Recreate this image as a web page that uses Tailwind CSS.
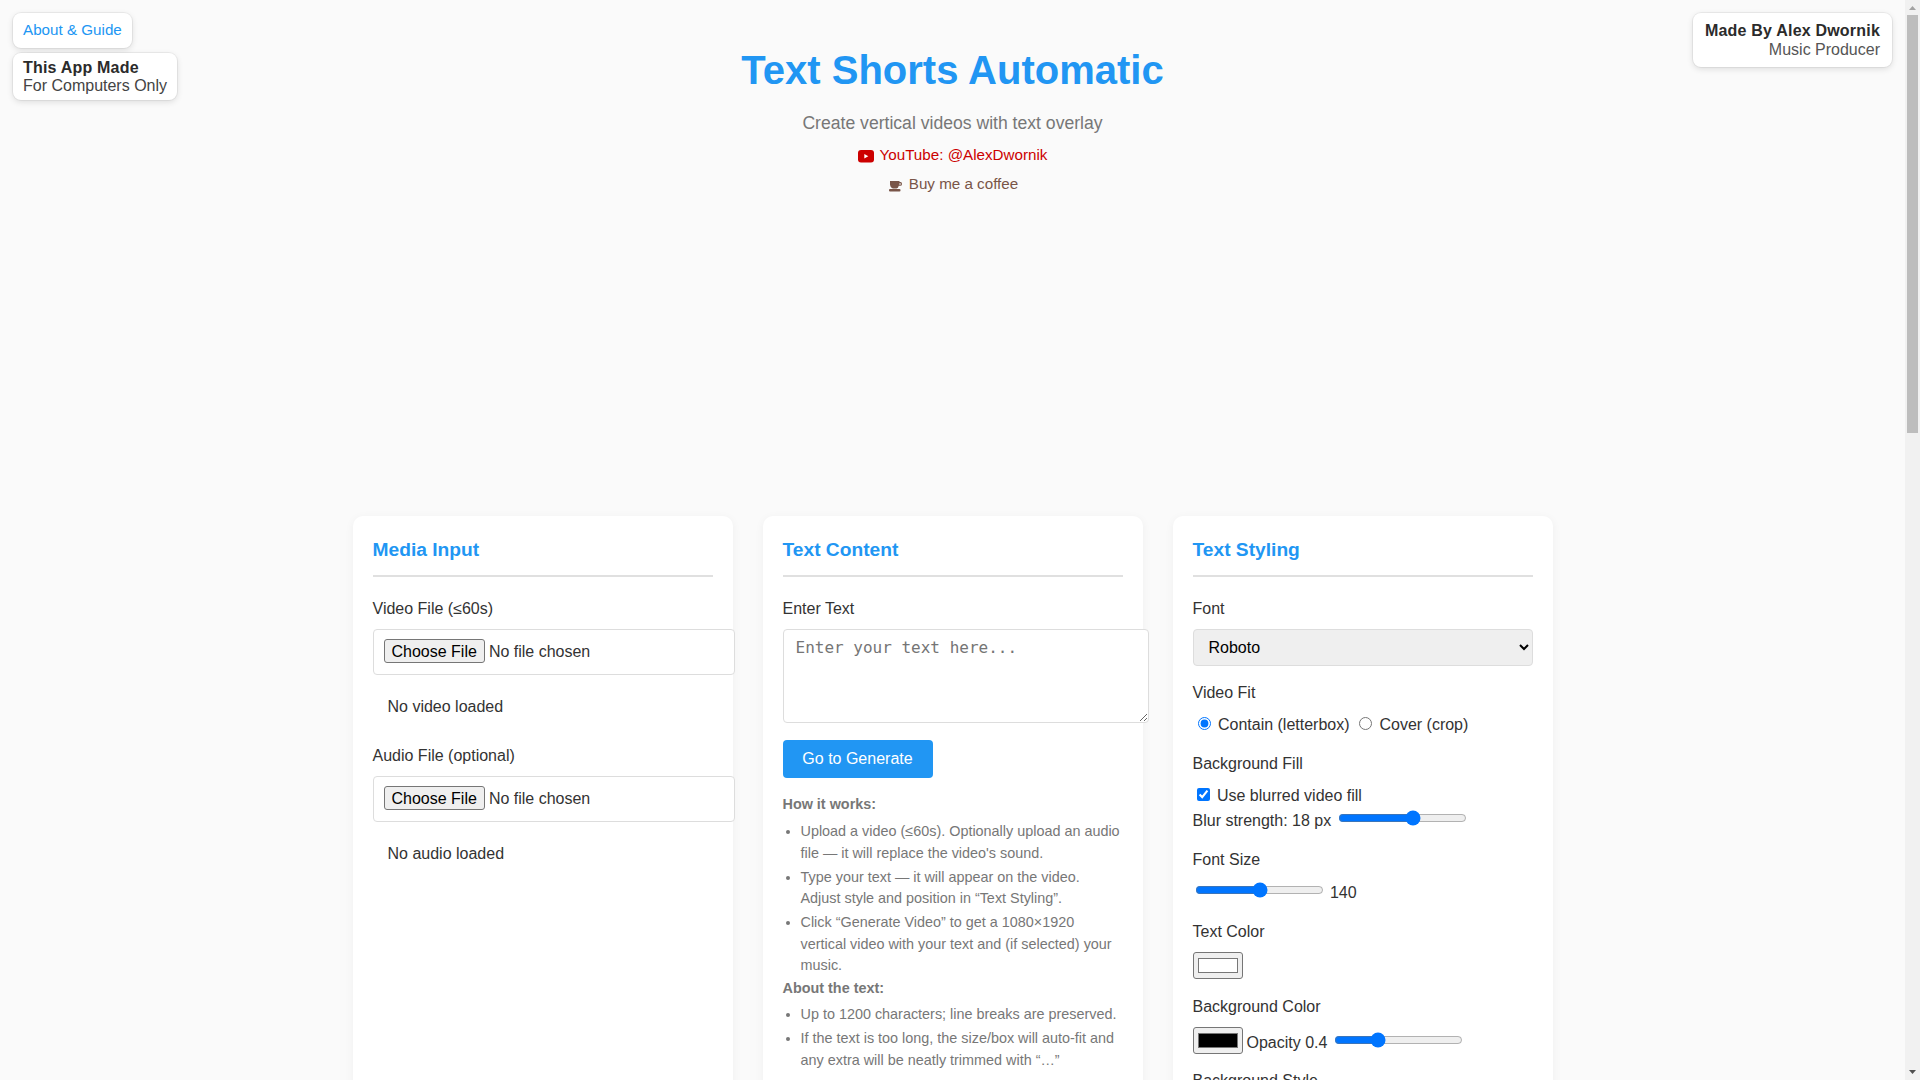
<!DOCTYPE html>
<html lang="en">
<head>
<meta charset="utf-8">
<title>Text Shorts Automatic</title>
<script src="https://cdn.jsdelivr.net/npm/@tailwindcss/browser@4"></script>
</head>
<body class="relative bg-[#fafafa] text-[#333] font-['Liberation_Sans',Arial,sans-serif] text-[16px] pr-[15px] min-h-[2713px]">
<a class="absolute left-[13px] top-[13px] h-[35px] px-[10px] flex items-center bg-white rounded-[8px] text-[15.2px] text-[#2196f3] shadow-[0_2px_6px_rgba(0,0,0,0.12),0_0_0_1px_rgba(0,0,0,0.05)]">About &amp; Guide</a>
<div class="absolute left-[13px] top-[53px] h-[47px] px-[10px] flex flex-col justify-center bg-white rounded-[8px] leading-[18px] shadow-[0_2px_6px_rgba(0,0,0,0.12),0_0_0_1px_rgba(0,0,0,0.05)]">
  <div class="font-bold tracking-[0.2px] text-[#2b2b2b]">This App Made</div>
  <div class="text-[#444]">For Computers Only</div>
</div>
<div class="absolute right-[28px] top-[13px] h-[54px] px-[12px] flex flex-col justify-center items-end bg-white rounded-[8px] leading-[19px] shadow-[0_2px_6px_rgba(0,0,0,0.12),0_0_0_1px_rgba(0,0,0,0.05)]">
  <div class="font-bold tracking-[0.2px] text-[#2b2b2b]">Made By Alex Dwornik</div>
  <div class="text-[#555]">Music Producer</div>
</div>

<div class="absolute right-0 top-0 w-[15px] h-[1080px] bg-[#f1f1f1]">
  <svg class="absolute left-[4px] top-[6px]" width="7" height="4" viewBox="0 0 7 4"><path d="M3.5 0 L7 4 H0 Z" fill="#a3a3a3"/></svg>
  <div class="absolute left-[2px] top-[15px] w-[11px] h-[418px] bg-[#bdbdbd]"></div>
  <svg class="absolute left-[4px] bottom-[6px]" width="7" height="4" viewBox="0 0 7 4"><path d="M0 0 H7 L3.5 4 Z" fill="#505050"/></svg>
</div>

<header class="pt-[46px] h-[516px] text-center">
  <h1 class="text-[40px] leading-[48px] font-bold text-[#2196f3]">Text Shorts Automatic</h1>
  <p class="mt-[19px] text-[17.6px] leading-[21px] text-[#777]">Create vertical videos with text overlay</p>
  <a class="mt-[12px] flex items-center justify-center text-[15.2px] leading-[18px] text-[#cc0000]">
    <svg class="mr-[6px] mt-[2px]" width="16" height="13" viewBox="0 0 16 13"><rect x="0" y="0" width="16" height="12.5" rx="3" fill="#cc0000"/><path d="M6.3 3.9 L10.3 6.2 L6.3 8.5 Z" fill="#fff"/></svg>YouTube: @AlexDwornik</a>
  <a class="mt-[11px] ml-[2px] flex items-center justify-center text-[15.2px] leading-[18px] text-[#795548]">
    <svg class="mr-[7px] mt-[4px]" width="13" height="11" viewBox="0 0 13 11"><path d="M1 0 H10.5 V1 H11.5 Q13 1 13 2.9 Q13 4.8 11.2 4.8 H9.8 Q9.2 7.4 7.5 7.4 H4 Q1.6 7.4 1 3.6 Z M10.4 2.2 V3.7 H11.2 Q11.9 3.7 11.9 2.9 Q11.9 2.2 11.2 2.2 Z" fill="#795548"/><rect x="0" y="8" width="11.5" height="2.6" rx="1" fill="#795548"/></svg>Buy me a coffee</a>
</header>

<main class="mx-auto w-[1200px] grid grid-cols-3 gap-[30px] items-start">
  <section class="bg-white rounded-[10px] p-[20px] h-[1400px] shadow-[0_2px_10px_rgba(0,0,0,0.05)]">
    <h2 class="pt-[2px] pb-[14px] text-[19.2px] leading-[23px] font-bold text-[#2196f3] border-b-2 border-[#e0e0e0]">Media Input</h2>
    <label class="block mt-[22px] leading-[20px] text-[#333]">Video File (≤60s)</label>
    <input type="file" class="block mt-[10px] box-content w-full h-[24px] pt-[9px] pb-[11px] px-[10px] border border-[#ddd] rounded-[4px] bg-white text-[#333] file:mr-[4px] file:h-[24px] file:px-[7px] file:border file:border-[#767676] file:rounded-[3px] file:bg-[#efefef] file:text-black">
    <div class="mt-[22px] ml-[15px] leading-[20px] text-[#333]">No video loaded</div>
    <label class="block mt-[29px] leading-[20px] text-[#333]">Audio File (optional)</label>
    <input type="file" class="block mt-[10px] box-content w-full h-[24px] pt-[9px] pb-[11px] px-[10px] border border-[#ddd] rounded-[4px] bg-white text-[#333] file:mr-[4px] file:h-[24px] file:px-[7px] file:border file:border-[#767676] file:rounded-[3px] file:bg-[#efefef] file:text-black">
    <div class="mt-[22px] ml-[15px] leading-[20px] text-[#333]">No audio loaded</div>
  </section>

  <section class="bg-white rounded-[10px] p-[20px] h-[1400px] shadow-[0_2px_10px_rgba(0,0,0,0.05)]">
    <h2 class="pt-[2px] pb-[14px] text-[19.2px] leading-[23px] font-bold text-[#2196f3] border-b-2 border-[#e0e0e0]">Text Content</h2>
    <label class="block mt-[22px] leading-[20px] text-[#333]">Enter Text</label>
    <textarea placeholder="Enter your text here..." class="block mt-[10px] box-content w-full h-[72px] px-[12px] pt-[8px] pb-[12px] border border-[#ddd] rounded-[4px] bg-white font-['DejaVu_Sans_Mono',monospace] text-[16px] leading-[19px] placeholder:text-[#757575]"></textarea>
    <button class="block mt-[17px] w-[150px] h-[38px] rounded-[4px] bg-[#2196f3] text-white text-[16px]">Go to Generate</button>
    <div class="mt-[18px] text-[14.4px] leading-[16px] text-[#777]">
      <strong class="block font-bold">How it works:</strong>
      <ul class="mt-[9px] ml-[18px] list-disc leading-[21.6px]">
        <li class="mb-[2.4px]">Upload a video (≤60s). Optionally upload an audio file — it will replace the video's sound.</li>
        <li class="mb-[2.4px]">Type your text — it will appear on the video. Adjust style and position in “Text Styling”.</li>
        <li class="mb-[2.4px]">Click “Generate Video” to get a 1080×1920 vertical video with your text and (if selected) your music.</li>
      </ul>
      <strong class="block mt-[3px] font-bold">About the text:</strong>
      <ul class="mt-[8px] ml-[18px] list-disc leading-[21.6px]">
        <li class="mb-[2.4px]">Up to 1200 characters; line breaks are preserved.</li>
        <li class="mb-[2.4px]">If the text is too long, the size/box will auto-fit and any extra will be neatly trimmed with “…”</li>
      </ul>
    </div>
  </section>

  <section class="bg-white rounded-[10px] p-[20px] h-[1400px] shadow-[0_2px_10px_rgba(0,0,0,0.05)]">
    <h2 class="pt-[2px] pb-[14px] text-[19.2px] leading-[23px] font-bold text-[#2196f3] border-b-2 border-[#e0e0e0]">Text Styling</h2>
    <label class="block mt-[22px] leading-[20px] text-[#333]">Font</label>
    <select class="block mt-[10px] w-full h-[37px] pl-[11px] pr-[12px] border border-[#ddd] rounded-[4px] bg-[#efefef] text-black text-[16px]"><option>Roboto</option></select>
    <label class="block mt-[17px] leading-[20px] text-[#333]">Video Fit</label>
    <div class="mt-[12px] flex items-center h-[18px]"><input type="radio" name="fit" checked class="ml-[5px] mb-[2px]"><span class="ml-[7.45px] mt-[2px]">Contain (letterbox)</span><input type="radio" name="fit" class="ml-[9.45px] mb-[2px]"><span class="ml-[7.45px] mt-[2px]">Cover (crop)</span></div>
    <label class="block mt-[21px] leading-[20px] text-[#333]">Background Fill</label>
    <div class="mt-[12px] flex items-center h-[18px]"><input type="checkbox" checked class="ml-[4px] mb-[1px]"><span class="ml-[7.45px] mt-[2px]">Use blurred video fill</span></div>
    <div class="mt-[7px] flex items-center h-[18px]"><span class="mt-[2px]">Blur strength: 18 px</span><input type="range" min="0" max="30" value="18" class="ml-[6.45px] mb-[4px] w-[129px]"></div>
    <label class="block mt-[21px] leading-[20px] text-[#333]">Font Size</label>
    <div class="mt-[13px] flex items-center h-[18px]"><input type="range" value="51" class="ml-[2px] mb-[4px] w-[129px]"><span class="ml-[6.45px] mt-[2px]">140</span></div>
    <label class="block mt-[21px] leading-[20px] text-[#333]">Text Color</label>
    <input type="color" value="#ffffff" class="block mt-[10px] w-[50px] h-[27px] px-[2px] py-[1px] border border-[#767676] rounded-[3px] bg-[#efefef]">
    <label class="block mt-[18px] leading-[20px] text-[#333]">Background Color</label>
    <div class="mt-[10px] flex items-center h-[27px]"><input type="color" value="#000000" class="block w-[50px] h-[27px] px-[2px] py-[1px] border border-[#767676] rounded-[3px] bg-[#efefef]"><span class="ml-[4px] mt-[5px]">Opacity 0.4</span><input type="range" min="0" max="1" step="0.01" value="0.32" class="ml-[6.45px] mb-[2px] w-[129px]"></div>
    <label class="block mt-[17px] leading-[20px] text-[#333]">Background Style</label>
  </section>
</main>
</body>
</html>
